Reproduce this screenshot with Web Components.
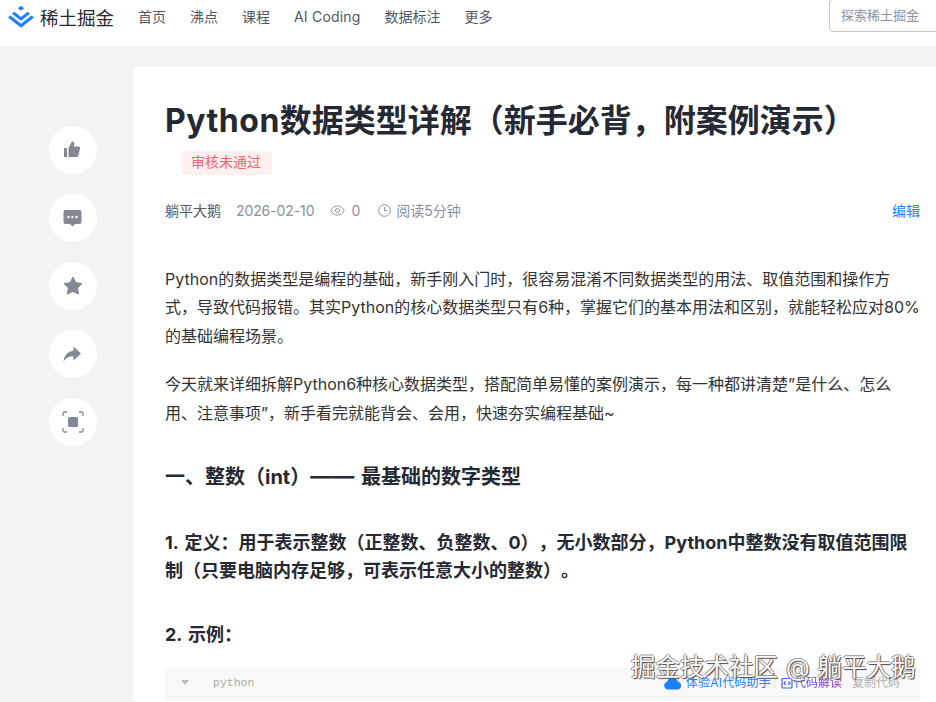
<!DOCTYPE html>
<html lang="zh">
<head>
<meta charset="utf-8">
<title>Python数据类型详解</title>
<style>
  html, body { margin: 0; height: 702px; overflow: hidden; background: #f2f3f5; }
  body { font-family: Inter, "Noto Sans CJK SC", sans-serif; position: relative; text-spacing-trim: space-all; }
  .dash { font-size: 22px; line-height: 20px; }
</style>
</head>
<body>
<jj-header></jj-header>
<jj-layout>
  <jj-sidebar slot="side"></jj-sidebar>
  <jj-article slot="main">
    <p>Python的数据类型是编程的基础，新手刚入门时，很容易混淆不同数据类型的用法、取值范围和操作方式，导致代码报错。其实Python的核心数据类型只有6种，掌握它们的基本用法和区别，就能轻松应对80%的基础编程场景。</p>
    <p>今天就来详细拆解Python6种核心数据类型，搭配简单易懂的案例演示，每一种都讲清楚”是什么、怎么用、注意事项”，新手看完就能背会、会用，快速夯实编程基础~</p>
    <h2>一、整数（int）<span class="dash">——</span> 最基础的数字类型</h2>
    <h3>1. 定义：用于表示整数（正整数、负整数、0），无小数部分，Python中整数没有取值范围限制（只要电脑内存足够，可表示任意大小的整数）。</h3>
    <h3 class="short">2. 示例：</h3>
    <jj-code lang="python"></jj-code>
  </jj-article>
</jj-layout>
<jj-watermark>掘金技术社区 @ 躺平大鹅</jj-watermark>

<script>
const FONT = 'Inter, "Noto Sans CJK SC", sans-serif';

class JjHeader extends HTMLElement {
  constructor() {
    super();
    this.attachShadow({ mode: 'open' }).innerHTML = `
    <style>
      :host { display: flex; height: 46px; background: #fff; padding-left: 8px; box-sizing: border-box; overflow: hidden; font-family: ${FONT}; }
      .logo { display: flex; align-items: center; gap: 6px; height: 33px; width: 130px; flex: none; }
      .logo svg { display: block; }
      .logo span { font-size: 18.5px; color: #252933; }
      nav { display: flex; gap: 24px; height: 32px; align-items: center; font-size: 14px; color: #515767; white-space: nowrap; }
      .wide { letter-spacing: .2px; }
      .search { flex: none; width: 130px; height: 33px; margin: -1px -23px 0 auto; box-sizing: border-box; border: 1px solid #c2c8d1; border-radius: 4px; padding-left: 11px; font-size: 13px; line-height: 31px; color: #8a919f; }
    </style>
    <div class="logo">
      <svg width="26" height="22" viewBox="0 0 26 22"><path fill="#1e80ff" d="M13 4.800 9.800 2.300 13 -.2l3.200 2.500zM13 11 6.400 5.800 4 7.700 13 14.800l9-7.100-2.400-1.900zM13 17.800 2.500 9.500 0 11.400l13 10.400 13-10.400-2.500-1.900z"/></svg>
      <span>稀土掘金</span>
    </div>
    <nav><span>首页</span><span>沸点</span><span>课程</span><span class="wide">AI Coding</span><span>数据标注</span><span>更多</span></nav>
    <div class="search">探索稀土掘金</div>`;
  }
}
customElements.define('jj-header', JjHeader);

class JjLayout extends HTMLElement {
  constructor() {
    super();
    this.attachShadow({ mode: 'open' }).innerHTML = `
    <style>
      :host { display: flex; padding: 21px 0 0 49px; }
      .side { display: block; flex: none; width: 84px; padding-top: 59px; }
    </style>
    <div class="side"><slot name="side"></slot></div>
    <slot name="main"></slot>`;
  }
}
customElements.define('jj-layout', JjLayout);

const ICONS = {
  like: '<path d="M2 9h3v9H2zM6.500 9 10 2.200c1.600 0 2.600 1.200 2.300 3L11.800 7.500h4.700c1.100 0 1.800 1 1.500 2l-1.700 7.200c-.2.800-.9 1.300-1.700 1.300H6.500z"/>',
  comment: '<path d="M3.500 3h14a2 2 0 0 1 2 2v10a2 2 0 0 1-2 2H13l-2.500 2.500L8 17H3.500a2 2 0 0 1-2-2V5a2 2 0 0 1 2-2z"/><g fill="#fff"><circle cx="6.500" cy="10" r="1.200"/><circle cx="10.500" cy="10" r="1.200"/><circle cx="14.500" cy="10" r="1.200"/></g>',
  star: '<path d="M11 2l2.800 5.700 6.200.9-4.500 4.400 1.100 6.200L11 16.300 5.400 19.200l1.100-6.200L2 8.600l6.200-.9z" stroke="#848895" stroke-width="1" stroke-linejoin="round"/>',
  share: '<path d="M11.500 3.500 19 10.500 11.500 17.500V13.200C7 13.200 3.800 14.800 1.500 18.500 2.200 12.500 5.500 8.400 11.500 7.800z"/>',
  focus: '<rect x="6" y="6" width="10" height="10" rx="1.500"/><path fill="none" stroke="#848895" stroke-width="1.300" d="M1 5V2.500A1.500 1.500 0 0 1 2.500 1H5M17 1h2.500A1.500 1.500 0 0 1 21 2.500V5M21 17v2.500a1.500 1.500 0 0 1-1.500 1.500H17M5 21H2.500A1.500 1.500 0 0 1 1 19.500V17"/>'
};

class JjAction extends HTMLElement {
  constructor() {
    super();
    this.attachShadow({ mode: 'open' }).innerHTML = `
    <style>
      :host { display: flex; width: 48px; height: 48px; border-radius: 50%; background: #fff; align-items: center; justify-content: center; }
      svg { display: block; fill: #848895; }
    </style>
    <svg width="22" height="22" viewBox="0 0 22 22">${ICONS[this.getAttribute('icon')]}</svg>`;
  }
}
customElements.define('jj-action', JjAction);

class JjSidebar extends HTMLElement {
  constructor() {
    super();
    const icons = ['like', 'comment', 'star', 'share', 'focus'];
    this.attachShadow({ mode: 'open' }).innerHTML = `
    <style>:host { display: flex; flex-direction: column; gap: 20px; width: 48px; }</style>
    ${icons.map(i => `<jj-action icon="${i}"></jj-action>`).join('')}`;
  }
}
customElements.define('jj-sidebar', JjSidebar);

class JjMeta extends HTMLElement {
  constructor() {
    super();
    this.attachShadow({ mode: 'open' }).innerHTML = `
    <style>
      :host { display: flex; align-items: center; height: 20px; font-size: 14px; color: #8a919f; white-space: nowrap; }
      .name { color: #515767; margin-right: 15px; }
      .date { letter-spacing: -.1px; }
      .ic { display: flex; align-items: center; gap: 6px; }
      .views { margin-left: 16px; }
      .read { margin-left: 18px; gap: 5px; }
      svg { display: block; }
      .edit { margin-left: auto; color: #1e80ff; font-size: 14px; }
    </style>
    <span class="name">躺平大鹅</span>
    <span class="date">2026-02-10</span>
    <span class="ic views">
      <svg width="15" height="15" viewBox="0 0 15 15" fill="none" stroke="#8a919f"><path d="M.8 7.500C2.400 4.500 4.700 3 7.500 3s5.100 1.500 6.700 4.500C12.600 10.500 10.300 12 7.500 12S2.400 10.500.8 7.500z"/><circle cx="7.500" cy="7.500" r="2"/></svg>
      <span>0</span>
    </span>
    <span class="ic read">
      <svg width="13" height="13" viewBox="0 0 13 13" fill="none" stroke="#8a919f"><circle cx="6.500" cy="6.500" r="5.800"/><path d="M6.500 3.200v3.500h2.800"/></svg>
      <span>阅读5分钟</span>
    </span>
    <span class="edit">编辑</span>`;
  }
}
customElements.define('jj-meta', JjMeta);

class JjArticle extends HTMLElement {
  constructor() {
    super();
    this.attachShadow({ mode: 'open' }).innerHTML = `
    <style>
      :host { display: block; flex: none; width: 819px; height: 635px; overflow: hidden; box-sizing: border-box; padding: 32px 32px 0; background: #fff; border-radius: 4px; color: #333; font-family: ${FONT}; }
      h1 { margin: 0; font-size: 32px; line-height: 44px; font-weight: 700; color: #252933; white-space: nowrap; }
      h1 span { letter-spacing: .5px; }
      .tag { display: block; width: fit-content; margin: 8px 0 0 17px; padding: 0 11px 0 9px; height: 24px; line-height: 22px; border-radius: 4px; background: #fff0f0; color: #ec666d; font-size: 14px; }
      jj-meta { margin-top: 25px; }
      .body { margin-top: 44.500px; }
      ::slotted(p) { margin: 0 0 20px; font-size: 16px; line-height: 28.500px; color: #333; }
      ::slotted(h2) { margin: 35px 0 0; font-size: 20px; line-height: 30px; font-weight: 700; color: #252933; word-spacing: 2px; }
      ::slotted(h3) { margin: 36.500px 0 0; font-size: 18px; line-height: 28px; font-weight: 700; color: #252933; word-spacing: 2px; }
    </style>
    <h1><span>Python</span>数据类型详解（新手必背，附案例演示）</h1>
    <div class="tag">审核未通过</div>
    <jj-meta></jj-meta>
    <div class="body"><slot></slot></div>`;
  }
}
customElements.define('jj-article', JjArticle);

class JjCode extends HTMLElement {
  constructor() {
    super();
    this.attachShadow({ mode: 'open' }).innerHTML = `
    <style>
      :host { display: block; margin-top: 19px; height: 33px; background: #f8f8f8; border-radius: 2px; }
      .bar { display: flex; align-items: center; height: 28px; padding-left: 16px; border-bottom: 1px solid #eee; font-size: 11px; color: #b6b6b6; }
      .arrow { width: 0; height: 0; border: 4px solid transparent; border-top: 5px solid #bbb; border-bottom: 0; margin-right: 24px; }
      .lang { font-family: "Liberation Mono", monospace; font-size: 11.500px; color: #aaa; }
      .tools { margin-left: auto; display: flex; align-items: center; font-size: 12px; line-height: 12px; white-space: nowrap; padding-right: 20px; position: relative; top: 1px; }
      .ai { color: #1e80ff; display: flex; align-items: center; gap: 3px; margin-right: 10px; letter-spacing: .2px; }
      .read { color: #8b2fc9; display: flex; align-items: center; gap: 1px; margin-right: 10px; background: linear-gradient(90deg, #2a6ee8, #9b2fb8); -webkit-background-clip: text; background-clip: text; -webkit-text-fill-color: transparent; }
      .copy { color: #b0b0b0; }
      svg { display: block; }
    </style>
    <div class="bar">
      <span class="arrow"></span><span class="lang">${this.getAttribute('lang')}</span>
      <span class="tools">
        <span class="ai"><svg width="20" height="13" viewBox="0 0 20 13"><path fill="#1e80ff" d="M5 12.500a4 4 0 0 1-1-7.800C4.800 2 7 .5 9.500.5c2.600 0 4.800 1.800 5.400 4.200a4 4 0 0 1 .100 7.800z"/></svg>体验AI代码助手</span>
        <span class="read"><svg width="12" height="12" viewBox="0 0 12 12" fill="none" stroke="#4a63e0" stroke-width="1.200"><rect x="1" y="1.500" width="10" height="9.500" rx="1"/><path d="M4.500 4.500 3 6.200l1.500 1.700M7.500 4.500 9 6.200 7.500 7.900"/></svg>代码解读</span>
        <span class="copy">复制代码</span>
      </span>
    </div>`;
  }
}
customElements.define('jj-code', JjCode);

class JjWatermark extends HTMLElement {
  constructor() {
    super();
    this.attachShadow({ mode: 'open' }).innerHTML = `
    <style>
      :host { position: absolute; left: 631px; top: 658px; font-size: 24.500px; line-height: 18px; word-spacing: 1px; color: #fafafa; white-space: nowrap; font-family: ${FONT};
        text-shadow: 1px 1px 1px #444, -1px 0 0 #888, 0 -1px 0 #999; }
    </style>
    <slot></slot>`;
  }
}
customElements.define('jj-watermark', JjWatermark);
</script>
</body>
</html>
